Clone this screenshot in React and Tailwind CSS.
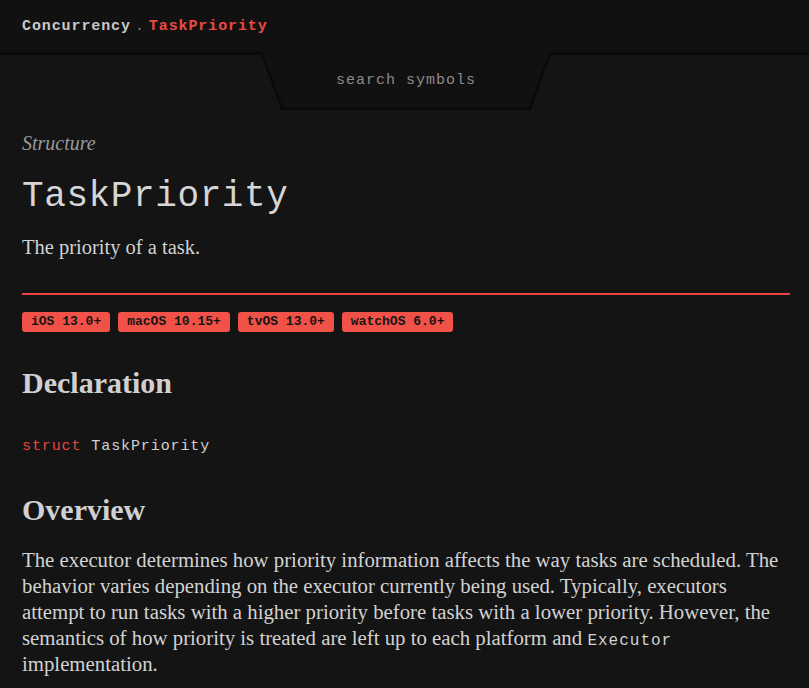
export default function App() {
  const badges = ["iOS 13.0+", "macOS 10.15+", "tvOS 13.0+", "watchOS 6.0+"];
  const mono = "font-['Liberation_Mono','DejaVu_Sans_Mono',monospace]";
  const serif = "font-['Liberation_Serif','DejaVu_Serif',serif]";

  return (
    <div className="min-h-[688px] w-[809px] bg-[#141414] text-[#d2d2d2]">
      {/* top bar */}
      <header className={`h-[52px] bg-[#111111] flex items-center pt-[3px] px-[22px] ${mono} text-[15px] font-bold tracking-[0.9px]`}>
        <span className="text-[#c8c8c8]">Concurrency</span>
        <span className="text-[#7a7a7a] mx-[4px] font-normal">.</span>
        <span className="text-[#ea4a40]">TaskPriority</span>
      </header>

      {/* search tab */}
      <div className="flex h-[58px]">
        <div className="w-[262px] h-[3px] bg-[#0a0a0a]" />
        <div className="relative w-[288px] h-[58px] flex items-center justify-center">
          <svg className="absolute inset-0" width="288" height="58" viewBox="0 0 288 58">
            <polygon points="0,0 288,0 268,58 20,58" fill="#111111" />
            <polyline points="0,1.5 20,56.5 268,56.5 288,1.5" fill="none" stroke="#0a0a0a" strokeWidth="2.5" />
          </svg>
          <span className={`relative ${mono} text-[15px] tracking-[1px] text-[#8a8a8a]`}>search symbols</span>
        </div>
        <div className="flex-1 h-[3px] bg-[#0a0a0a]" />
      </div>

      <main className="pl-[22px] pr-[19px]">
        <p className={`${serif} italic text-[20px] text-[#9a9a9a] mt-[22px] leading-[22px]`}>Structure</p>
        <h1 className={`${mono} font-light text-[36px] tracking-[0.6px] leading-[44px] mt-[21px] text-[#d6d6d6]`}>TaskPriority</h1>
        <p className={`${serif} text-[20.5px] leading-[26px] mt-[15px] text-[#d2d2d2]`}>The priority of a task.</p>

        <div className="h-[2px] bg-[#e8463d] mt-[33px]" />

        <div className="flex gap-[8px] mt-[17px]">
          {badges.map((b) => (
            <span
              key={b}
              className={`h-[20px] px-[9px] rounded-[3px] bg-[#f05248] text-[#141414] ${mono} font-bold text-[13px] leading-[20px]`}
            >
              {b}
            </span>
          ))}
        </div>

        <h2 className={`${serif} font-bold text-[30px] leading-[32px] mt-[35px] text-[#d0d0d0]`}>Declaration</h2>

        <p className={`${mono} text-[15px] tracking-[0.9px] leading-[22px] mt-[37px]`}>
          <span className="text-[#e8463d]">struct</span> <span className="text-[#d2d2d2]">TaskPriority</span>
        </p>

        <h2 className={`${serif} font-bold text-[30px] leading-[32px] mt-[36px] text-[#d0d0d0]`}>Overview</h2>

        <p className={`${serif} text-[20.8px] leading-[26px] mt-[21px] text-[#d2d2d2] whitespace-nowrap`}>
          The executor determines how priority information affects the way tasks are scheduled. The
          <br />
          behavior varies depending on the executor currently being used. Typically, executors
          <br />
          attempt to run tasks with a higher priority before tasks with a lower priority. However, the
          <br />
          semantics of how priority is treated are left up to each platform and{" "}
          <code className={`${mono} text-[16px] tracking-[1px] leading-none`}>Executor</code>
          <br />
          implementation.
        </p>
      </main>
    </div>
  );
}
